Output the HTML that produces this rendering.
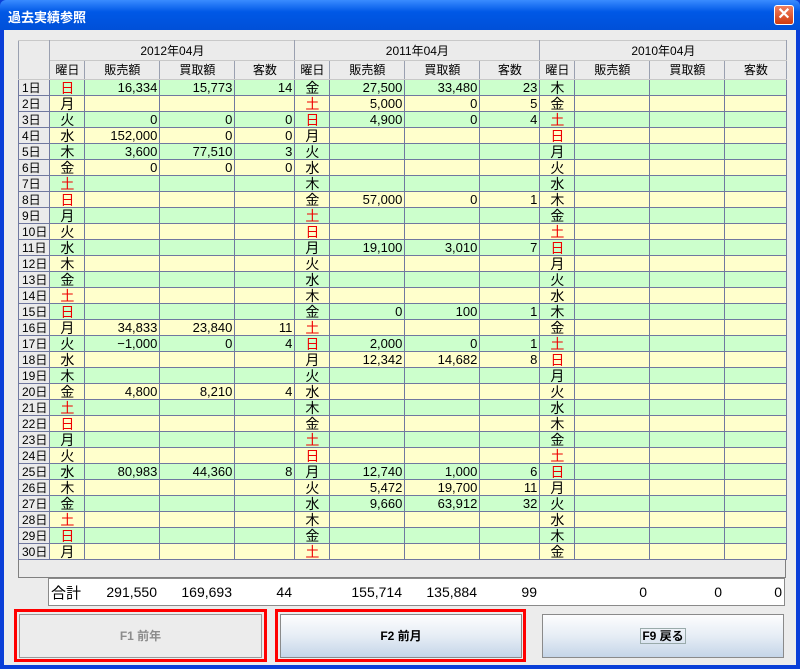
<!DOCTYPE html>
<html><head><meta charset="utf-8"><style>
*{margin:0;padding:0;box-sizing:border-box}
body{width:800px;height:669px;overflow:hidden;background:#0a3fd8;font-family:"Liberation Sans","Noto Sans CJK JP",sans-serif;position:relative}
#title{position:absolute;left:0;top:0;width:800px;height:30px;background:linear-gradient(#3a8cff,#0058e6 40%,#0050d8);color:#fff;font-weight:bold;font-size:13px;padding:7px 0 0 8px;border-radius:6px 6px 0 0}
#close{position:absolute;right:6px;top:5px;width:20px;height:20px;background:linear-gradient(#f08060,#d03a10);border:1px solid #fff;border-radius:3px;color:#fff;font-size:16px;line-height:17px;text-align:center;font-weight:bold}
#client{position:absolute;left:4px;top:30px;width:792px;height:635px;background:#ececec}
#panel{position:absolute;left:18px;top:40px;width:768px;height:538px;border:1px solid #808080;background:#ebebeb}
table{border-collapse:collapse;table-layout:fixed;font-size:13px}
#grid{position:absolute;left:18px;top:40px}
#grid td{border:1px solid #7078a0;height:16px;padding:0 2px;text-align:right;line-height:14px;white-space:nowrap;overflow:hidden}
#grid tr.h td{background:#ebebeb;border-color:#c8c8c8 #9aa0b0;text-align:center;font-size:12px}
#grid td.d{background:#ebebeb;text-align:left;font-size:12px;padding-left:3px;border-color:#7078a0}
#grid tr.g td:not(.d){background:#ccffcc}
#grid tr.y td:not(.d){background:#ffffcc}
#grid td.w{text-align:center;font-size:14px}
.r{color:#e00}
#tot{position:absolute;left:48px;top:578px;width:737px;height:28px;background:#fff;border:1px solid #8a8a8a}
#tot td{height:26px;text-align:right;font-size:14px;padding-right:2px}
.btn{position:absolute;top:614px;height:44px;border:1px solid #8a8a8a;font-weight:bold;font-size:12px;text-align:center;line-height:42px}
.red{position:absolute;top:609px;height:53px;border:3px solid #f00}
</style></head><body>
<div id="title">過去実績参照</div><div id="close">✕</div>
<div id="client"></div>
<div id="panel"></div>
<table id="grid">
<colgroup><col style="width:30px"><col style="width:35px"><col style="width:75px"><col style="width:75px"><col style="width:60px"><col style="width:35px"><col style="width:75px"><col style="width:75px"><col style="width:60px"><col style="width:35px"><col style="width:75px"><col style="width:75px"><col style="width:62px"></colgroup>
<tr class="h"><td rowspan="2" style="height:39px"></td><td colspan="4" style="height:20px">2012年04月</td><td colspan="4">2011年04月</td><td colspan="4">2010年04月</td></tr>
<tr class="h"><td style="height:19px">曜日</td><td>販売額</td><td>買取額</td><td>客数</td><td>曜日</td><td>販売額</td><td>買取額</td><td>客数</td><td>曜日</td><td>販売額</td><td>買取額</td><td>客数</td></tr>
<tr class="g"><td class="d">1日</td><td class="w r">日</td><td>16,334</td><td>15,773</td><td>14</td><td class="w">金</td><td>27,500</td><td>33,480</td><td>23</td><td class="w">木</td><td></td><td></td><td></td></tr>
<tr class="y"><td class="d">2日</td><td class="w">月</td><td></td><td></td><td></td><td class="w r">土</td><td>5,000</td><td>0</td><td>5</td><td class="w">金</td><td></td><td></td><td></td></tr>
<tr class="g"><td class="d">3日</td><td class="w">火</td><td>0</td><td>0</td><td>0</td><td class="w r">日</td><td>4,900</td><td>0</td><td>4</td><td class="w r">土</td><td></td><td></td><td></td></tr>
<tr class="y"><td class="d">4日</td><td class="w">水</td><td>152,000</td><td>0</td><td>0</td><td class="w">月</td><td></td><td></td><td></td><td class="w r">日</td><td></td><td></td><td></td></tr>
<tr class="g"><td class="d">5日</td><td class="w">木</td><td>3,600</td><td>77,510</td><td>3</td><td class="w">火</td><td></td><td></td><td></td><td class="w">月</td><td></td><td></td><td></td></tr>
<tr class="y"><td class="d">6日</td><td class="w">金</td><td>0</td><td>0</td><td>0</td><td class="w">水</td><td></td><td></td><td></td><td class="w">火</td><td></td><td></td><td></td></tr>
<tr class="g"><td class="d">7日</td><td class="w r">土</td><td></td><td></td><td></td><td class="w">木</td><td></td><td></td><td></td><td class="w">水</td><td></td><td></td><td></td></tr>
<tr class="y"><td class="d">8日</td><td class="w r">日</td><td></td><td></td><td></td><td class="w">金</td><td>57,000</td><td>0</td><td>1</td><td class="w">木</td><td></td><td></td><td></td></tr>
<tr class="g"><td class="d">9日</td><td class="w">月</td><td></td><td></td><td></td><td class="w r">土</td><td></td><td></td><td></td><td class="w">金</td><td></td><td></td><td></td></tr>
<tr class="y"><td class="d">10日</td><td class="w">火</td><td></td><td></td><td></td><td class="w r">日</td><td></td><td></td><td></td><td class="w r">土</td><td></td><td></td><td></td></tr>
<tr class="g"><td class="d">11日</td><td class="w">水</td><td></td><td></td><td></td><td class="w">月</td><td>19,100</td><td>3,010</td><td>7</td><td class="w r">日</td><td></td><td></td><td></td></tr>
<tr class="y"><td class="d">12日</td><td class="w">木</td><td></td><td></td><td></td><td class="w">火</td><td></td><td></td><td></td><td class="w">月</td><td></td><td></td><td></td></tr>
<tr class="g"><td class="d">13日</td><td class="w">金</td><td></td><td></td><td></td><td class="w">水</td><td></td><td></td><td></td><td class="w">火</td><td></td><td></td><td></td></tr>
<tr class="y"><td class="d">14日</td><td class="w r">土</td><td></td><td></td><td></td><td class="w">木</td><td></td><td></td><td></td><td class="w">水</td><td></td><td></td><td></td></tr>
<tr class="g"><td class="d">15日</td><td class="w r">日</td><td></td><td></td><td></td><td class="w">金</td><td>0</td><td>100</td><td>1</td><td class="w">木</td><td></td><td></td><td></td></tr>
<tr class="y"><td class="d">16日</td><td class="w">月</td><td>34,833</td><td>23,840</td><td>11</td><td class="w r">土</td><td></td><td></td><td></td><td class="w">金</td><td></td><td></td><td></td></tr>
<tr class="g"><td class="d">17日</td><td class="w">火</td><td>−1,000</td><td>0</td><td>4</td><td class="w r">日</td><td>2,000</td><td>0</td><td>1</td><td class="w r">土</td><td></td><td></td><td></td></tr>
<tr class="y"><td class="d">18日</td><td class="w">水</td><td></td><td></td><td></td><td class="w">月</td><td>12,342</td><td>14,682</td><td>8</td><td class="w r">日</td><td></td><td></td><td></td></tr>
<tr class="g"><td class="d">19日</td><td class="w">木</td><td></td><td></td><td></td><td class="w">火</td><td></td><td></td><td></td><td class="w">月</td><td></td><td></td><td></td></tr>
<tr class="y"><td class="d">20日</td><td class="w">金</td><td>4,800</td><td>8,210</td><td>4</td><td class="w">水</td><td></td><td></td><td></td><td class="w">火</td><td></td><td></td><td></td></tr>
<tr class="g"><td class="d">21日</td><td class="w r">土</td><td></td><td></td><td></td><td class="w">木</td><td></td><td></td><td></td><td class="w">水</td><td></td><td></td><td></td></tr>
<tr class="y"><td class="d">22日</td><td class="w r">日</td><td></td><td></td><td></td><td class="w">金</td><td></td><td></td><td></td><td class="w">木</td><td></td><td></td><td></td></tr>
<tr class="g"><td class="d">23日</td><td class="w">月</td><td></td><td></td><td></td><td class="w r">土</td><td></td><td></td><td></td><td class="w">金</td><td></td><td></td><td></td></tr>
<tr class="y"><td class="d">24日</td><td class="w">火</td><td></td><td></td><td></td><td class="w r">日</td><td></td><td></td><td></td><td class="w r">土</td><td></td><td></td><td></td></tr>
<tr class="g"><td class="d">25日</td><td class="w">水</td><td>80,983</td><td>44,360</td><td>8</td><td class="w">月</td><td>12,740</td><td>1,000</td><td>6</td><td class="w r">日</td><td></td><td></td><td></td></tr>
<tr class="y"><td class="d">26日</td><td class="w">木</td><td></td><td></td><td></td><td class="w">火</td><td>5,472</td><td>19,700</td><td>11</td><td class="w">月</td><td></td><td></td><td></td></tr>
<tr class="g"><td class="d">27日</td><td class="w">金</td><td></td><td></td><td></td><td class="w">水</td><td>9,660</td><td>63,912</td><td>32</td><td class="w">火</td><td></td><td></td><td></td></tr>
<tr class="y"><td class="d">28日</td><td class="w r">土</td><td></td><td></td><td></td><td class="w">木</td><td></td><td></td><td></td><td class="w">水</td><td></td><td></td><td></td></tr>
<tr class="g"><td class="d">29日</td><td class="w r">日</td><td></td><td></td><td></td><td class="w">金</td><td></td><td></td><td></td><td class="w">木</td><td></td><td></td><td></td></tr>
<tr class="y"><td class="d">30日</td><td class="w">月</td><td></td><td></td><td></td><td class="w r">土</td><td></td><td></td><td></td><td class="w">金</td><td></td><td></td><td></td></tr>
</table>
<div id="tot"><table>
<colgroup><col style="width:35px"><col style="width:75px"><col style="width:75px"><col style="width:60px"><col style="width:35px"><col style="width:75px"><col style="width:75px"><col style="width:60px"><col style="width:35px"><col style="width:75px"><col style="width:75px"><col style="width:60px"></colgroup>
<tr><td style="text-align:left;padding-left:2px;font-size:15px">合計</td><td>291,550</td><td>169,693</td><td>44</td><td></td><td>155,714</td><td>135,884</td><td>99</td><td></td><td>0</td><td>0</td><td>0</td></tr>
</table></div>
<div class="red" style="left:14px;width:253px"></div>
<div class="red" style="left:275px;width:251px"></div>
<div class="btn" style="left:19px;width:243px;background:#ececec;color:#8c8c8c;border-color:#9a9a9a">F1 前年</div>
<div class="btn" style="left:280px;width:242px;background:linear-gradient(#fdfdfe,#e6edf5 50%,#c5d5e8);color:#000">F2 前月</div>
<div class="btn" style="left:542px;width:242px;background:linear-gradient(#fdfdfe,#e6edf5 50%,#c5d5e8);color:#000"><span style="border:1px solid #9aa;padding:0 1px">F9 戻る</span></div>
</body></html>
